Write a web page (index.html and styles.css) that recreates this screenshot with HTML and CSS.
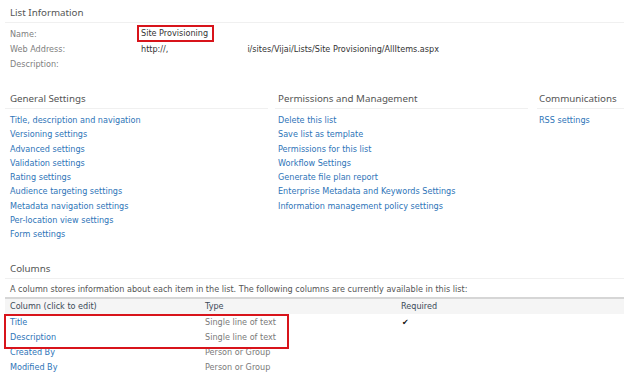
FILE: index.html
```html
<!DOCTYPE html>
<html>
<head>
<meta charset="utf-8">
<link rel="stylesheet" href="styles.css">
</head>
<body>
<section class="info">
  <h2 class="head">List Information</h2>
  <div class="info-rows">
    <div class="info-row"><span class="label">Name:</span><span class="value"><span class="hl">Site Provisioning</span></span></div>
    <div class="info-row"><span class="label">Web Address:</span><span class="value">http://,<span class="redact"></span>i/sites/Vijai/Lists/Site Provisioning/AllItems.aspx</span></div>
    <div class="info-row"><span class="label">Description:</span><span class="value"></span></div>
  </div>
</section>

<div class="settings">
  <section class="col col1">
    <h2 class="head">General Settings</h2>
    <ul class="links">
      <li><a>Title, description and navigation</a></li>
      <li><a>Versioning settings</a></li>
      <li><a>Advanced settings</a></li>
      <li><a>Validation settings</a></li>
      <li><a>Rating settings</a></li>
      <li><a>Audience targeting settings</a></li>
      <li><a>Metadata navigation settings</a></li>
      <li><a>Per-location view settings</a></li>
      <li><a>Form settings</a></li>
    </ul>
  </section>
  <section class="col col2">
    <h2 class="head">Permissions and Management</h2>
    <ul class="links">
      <li><a>Delete this list</a></li>
      <li><a>Save list as template</a></li>
      <li><a>Permissions for this list</a></li>
      <li><a>Workflow Settings</a></li>
      <li><a>Generate file plan report</a></li>
      <li><a>Enterprise Metadata and Keywords Settings</a></li>
      <li><a>Information management policy settings</a></li>
    </ul>
  </section>
  <section class="col col3">
    <h2 class="head">Communications</h2>
    <ul class="links">
      <li><a>RSS settings</a></li>
    </ul>
  </section>
</div>

<section class="columns">
  <h2 class="head">Columns</h2>
  <p class="desc">A column stores information about each item in the list. The following columns are currently available in this list:</p>
  <div class="table">
    <div class="trow thead"><span class="c1">Column (click to edit)</span><span class="c2">Type</span><span class="c3">Required</span></div>
    <div class="boxed">
      <div class="trow"><a class="c1">Title</a><span class="c2">Single line of text</span><span class="c3 check">&#10004;</span></div>
      <div class="trow"><a class="c1">Description</a><span class="c2">Single line of text</span><span class="c3"></span></div>
    </div>
    <div class="trow"><a class="c1">Created By</a><span class="c2">Person or Group</span><span class="c3"></span></div>
    <div class="trow"><a class="c1">Modified By</a><span class="c2">Person or Group</span><span class="c3"></span></div>
  </div>
</section>
</body>
</html>
```

FILE: styles.css
```css
* { box-sizing: border-box; }
html, body { margin: 0; padding: 0; background: #fff; }
body {
  font-family: "DejaVu Sans", Verdana, sans-serif;
  font-size: 8.1px;
  color: #444;
  overflow: hidden;
  width: 624px;
  height: 373px;
  padding-left: 5px;
}
.head {
  font-family: "Noto Sans", "Open Sans", sans-serif;
  font-weight: normal;
  font-size: 9.75px;
  color: #555;
  margin: 0;
  height: 22px;
  padding: 5px 0 0 5px;
  line-height: 13px;
  border-bottom: 1px solid #f0f0f0;
  white-space: nowrap;
}
a { color: #2e74b8; text-decoration: none; }

/* list information */
.info { padding-top: 1px; }
.info-rows { margin-top: 4px; }
.info-row { display: flex; height: 15px; line-height: 15px; padding-left: 5px; }
.label { width: 131px; color: #808080; }
.value { color: #333; white-space: nowrap; }
.hl {
  display: inline-block;
  vertical-align: top;
  margin: 0 0 0 -2px;
  padding: 0 4px 0 2px;
  line-height: 13px;
  height: 13px;
  outline: 2px solid #d8141b;
}
.redact { display: inline-block; width: 79px; }

/* settings */
.settings { display: flex; margin-top: 15px; }
.col { display: flex; flex-direction: column; }
.col1 { width: 263px; margin-right: 7px; }
.col2 { width: 253px; margin-right: 9px; }
.col3 { flex: 1; }
.col2 .head, .col2 .links { padding-left: 3px; }
.col3 .head, .col3 .links { padding-left: 2px; }
.links { list-style: none; margin: 4px 0 0 0; padding: 0 0 0 5px; }
.links li { height: 14.3px; line-height: 14.3px; white-space: nowrap; }

/* columns */
.columns { margin-top: 15px; }
.desc { margin: 2px 0 0 0; height: 16px; line-height: 16px; padding-left: 5px; color: #555; white-space: nowrap; }
.table { margin-top: 0; }
.trow { display: flex; height: 15px; line-height: 15px; padding-left: 5px; white-space: nowrap; }
.thead {
  background: #f5f5f5;
  border-top: 2px solid #d6d6d6;
  height: 17px;
  line-height: 14px;
  color: #3b4a58;
}
.c1 { width: 195px; }
.c2 { width: 196px; color: #7a7a7a; }
.thead .c2 { color: #3b4a58; }
.c3 { color: #3b4a58; }
.boxed { position: relative; margin-top: 1px; }
.boxed::after {
  content: "";
  position: absolute;
  left: -1px;
  top: -1px;
  width: 281px;
  height: 31px;
  border: 2px solid #d8141b;
  pointer-events: none;
}
.check { color: #111; font-size: 8px; padding-left: 1px; }
```
